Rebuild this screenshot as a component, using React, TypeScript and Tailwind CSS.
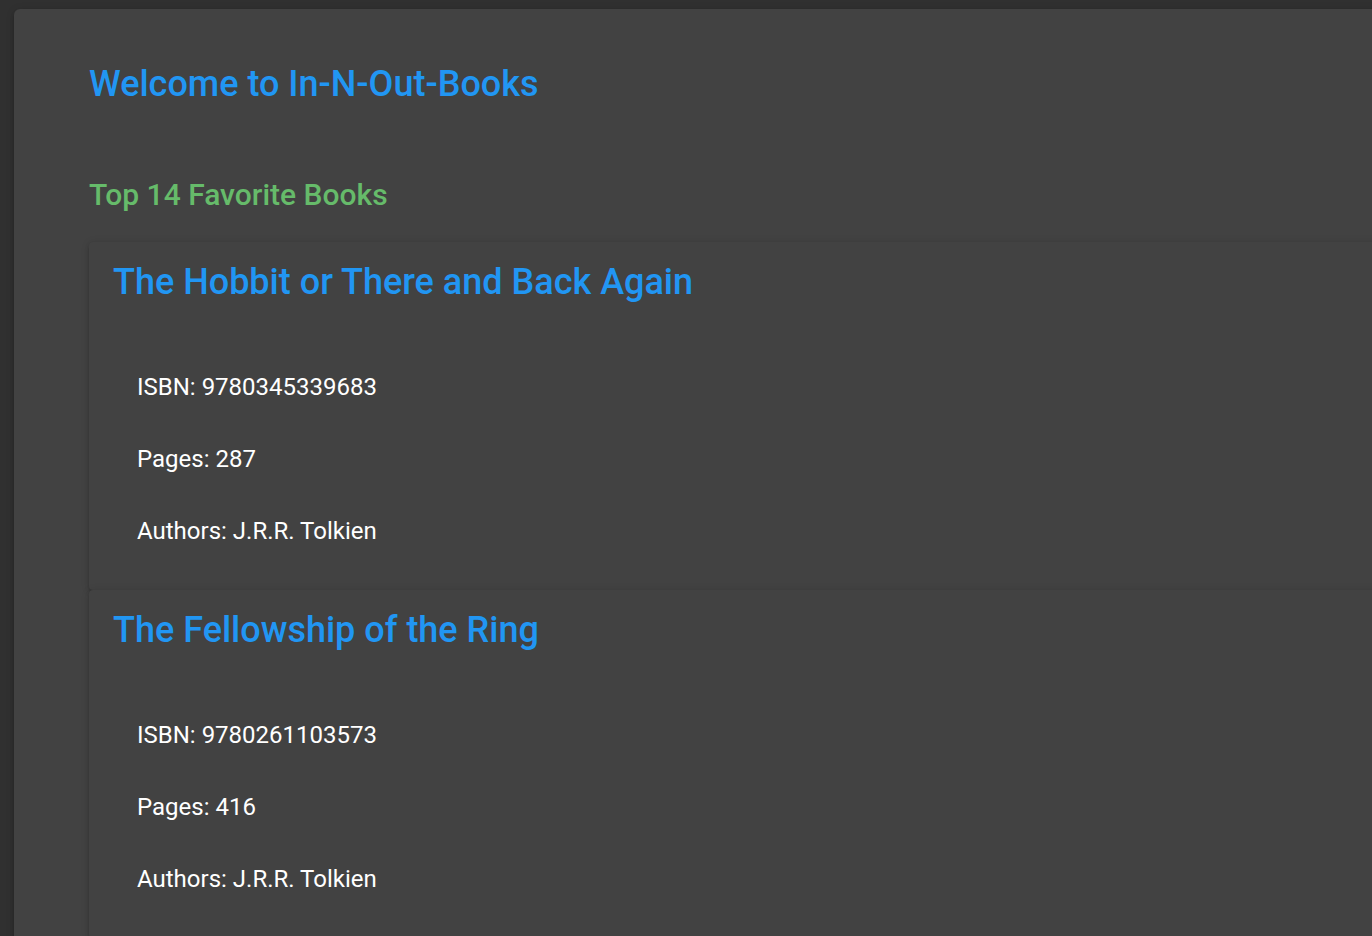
const books = [
  { title: "The Hobbit or There and Back Again", isbn: "9780345339683", pages: 287, authors: "J.R.R. Tolkien" },
  { title: "The Fellowship of the Ring", isbn: "9780261103573", pages: 416, authors: "J.R.R. Tolkien" },
];

const paper =
  "shadow-[0_3px_3px_-2px_rgba(0,0,0,0.2),0_3px_4px_0_rgba(0,0,0,0.14),0_1px_8px_0_rgba(0,0,0,0.12)]";

export default function App() {
  return (
    <div className="h-[936px] w-full overflow-hidden bg-[#303030] font-['Roboto',sans-serif] text-white">
      <div className={`ml-[14px] mt-[9px] min-h-[1000px] w-[1420px] rounded-md bg-[#424242] pl-[75px] pt-[54px] ${paper}`}>
        <h1 className="text-[36px] font-medium leading-[43px] text-[#2196f3]">Welcome to In-N-Out-Books</h1>
        <h2 className="mt-[71px] text-[30px] font-medium leading-[36px] text-[#66bb6a]">Top 14 Favorite Books</h2>
        <div className="mt-[29px] flex flex-col">
          {books.map((b) => (
            <div key={b.isbn} className={`rounded bg-[#424242] px-6 pt-[19px] pb-[41px] ${paper}`}>
              <h3 className="text-[36px] font-medium leading-[43px] text-[#2196f3]">{b.title}</h3>
              <div className="mt-[65px] flex flex-col gap-9 pl-6 text-[24px] leading-[36px]">
                <p>ISBN: {b.isbn}</p>
                <p>Pages: {b.pages}</p>
                <p>Authors: {b.authors}</p>
              </div>
            </div>
          ))}
        </div>
      </div>
    </div>
  );
}
